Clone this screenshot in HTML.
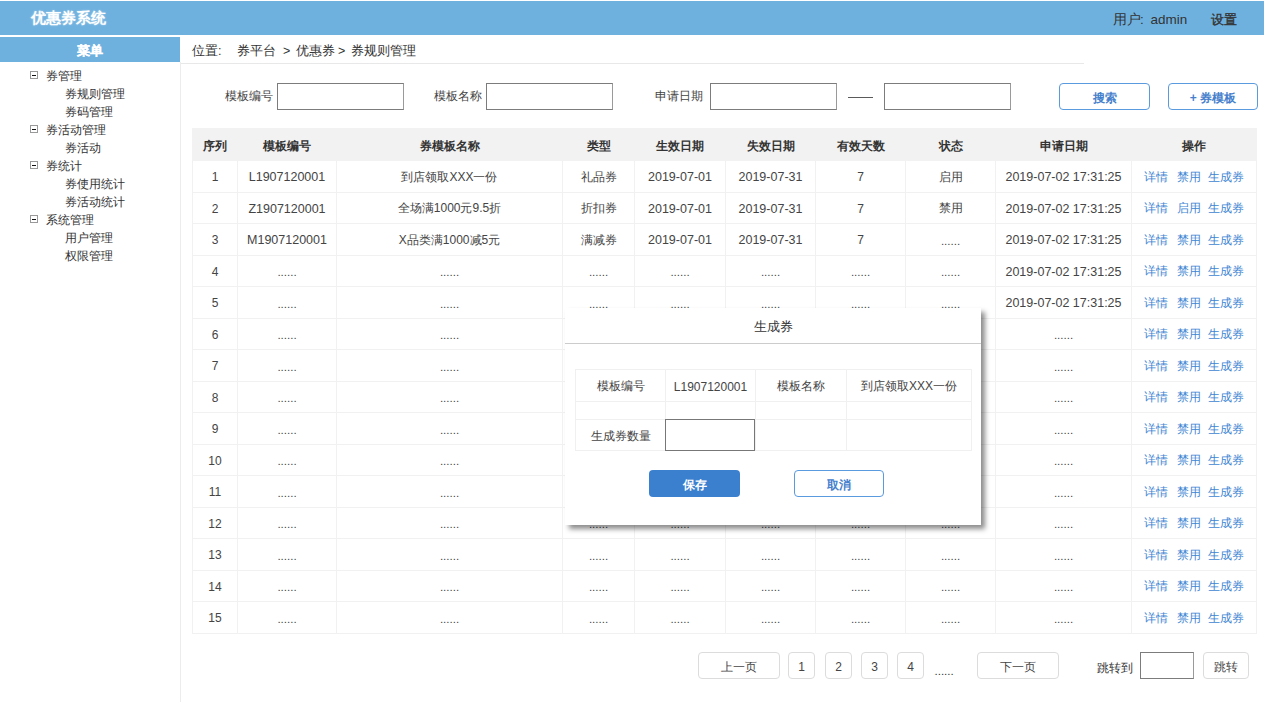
<!DOCTYPE html>
<html><head><meta charset="utf-8">
<style>
*{box-sizing:border-box;margin:0;padding:0}
html,body{width:1280px;height:702px;overflow:hidden;background:#fff}
body{position:relative;font-family:"Liberation Sans",sans-serif;color:#333;font-size:12px}
.a{position:absolute;white-space:nowrap}
#hdr{left:0;top:1px;width:1264px;height:34px;background:#6eb1df}
#title{left:31px;top:8px;font-size:14.5px;font-weight:bold;color:#fff;line-height:20px;text-shadow:0 0 2px rgba(255,255,255,.5)}
.user{top:10.5px;font-size:13.5px;line-height:18px;color:#333}
#sidehd{left:0;top:37px;width:180px;height:25px;background:#6eb1df;color:#fff;font-weight:bold;text-align:center;line-height:29px;font-size:12.5px;-webkit-text-stroke:0.3px #fff}
#vline{left:180px;top:62px;width:1px;height:640px;background:#ececec}
.menu{left:30px;font-size:12.3px;line-height:18px;color:#333;margin-top:1px}
.menu .ic{display:inline-block;width:8px;height:8px;border:1px solid #999;position:relative;vertical-align:middle;margin-right:8px;top:-2px}
.menu .ic:after{content:"";position:absolute;left:1px;top:3px;width:4px;height:1.5px;background:#111}
.crumb{top:42px;font-size:12.5px;line-height:18px;color:#333}
#crumbline{left:181px;top:63px;width:903px;height:1px;background:#e8e8e8}
.lbl{font-size:11.7px;line-height:16px;color:#444;top:87.5px}
.inp{border:1px solid #7c7c7c;border-right-color:#9a9a9a;background:#fff;height:27px;top:83px}
.btn{top:83px;height:27px;border:1px solid #5a9ade;border-radius:4px;color:#4580cc;font-weight:bold;text-align:center;line-height:28px;font-size:12px;background:#fff}
table.t{position:absolute;left:192px;top:128px;border-collapse:collapse;table-layout:fixed;width:1064px}
table.t th{background:#f2f2f2;height:32px;font-weight:bold;font-size:12px;color:#333;border:1px solid #f2f2f2;padding-top:3px}
table.t td{height:31.5px;font-size:12px;text-align:center;color:#444;border:1px solid #f1f1f1;padding-top:2px}
table.t td.dots{font-size:11.5px;padding-top:3px}
table.t td.op{color:#3f86d3;text-align:left;padding-left:12px;white-space:nowrap}
td.op span{margin-right:8.5px}
td.op span.m{margin-right:7px}
table.t td.n{font-size:12.5px}
table.d td{border:1px solid #f0f0f0;text-align:center;font-size:12px;color:#444;padding:2px 0 0}
#dlg{left:565px;top:308px;width:416px;height:217px;background:#fff;box-shadow:4px 4px 5px rgba(0,0,0,.45)}
.pg{top:652px;height:27px;border:1px solid #dcdcdc;border-radius:4px;text-align:center;line-height:28px;font-size:12px;color:#444;background:#fff}
</style></head><body>
<div id="hdr" class="a"></div>
<div id="title" class="a">优惠券系统</div>
<div class="a user" style="left:1112.5px">用户</div><div class="a user" style="left:1140px">:</div><div class="a user" style="left:1150.5px">admin</div><div class="a user" style="left:1211px;font-size:13px;-webkit-text-stroke:0.35px #333">设置</div>
<div id="sidehd" class="a">菜单</div>
<div id="vline" class="a"></div>

<div class="a menu" style="top:66px"><span class="ic"></span>券管理</div>
<div class="a menu" style="top:84px;left:65px">券规则管理</div>
<div class="a menu" style="top:102px;left:65px">券码管理</div>
<div class="a menu" style="top:120px"><span class="ic"></span>券活动管理</div>
<div class="a menu" style="top:138px;left:65px">券活动</div>
<div class="a menu" style="top:156px"><span class="ic"></span>券统计</div>
<div class="a menu" style="top:174px;left:65px">券使用统计</div>
<div class="a menu" style="top:192px;left:65px">券活动统计</div>
<div class="a menu" style="top:210px"><span class="ic"></span>系统管理</div>
<div class="a menu" style="top:228px;left:65px">用户管理</div>
<div class="a menu" style="top:246px;left:65px">权限管理</div>

<div class="a crumb" style="left:192px">位置:</div><div class="a crumb" style="left:237px">券平台</div><div class="a crumb" style="left:283px">&gt;</div><div class="a crumb" style="left:295.5px">优惠券</div><div class="a crumb" style="left:338px">&gt;</div><div class="a crumb" style="left:350.5px">券规则管理</div>
<div id="crumbline" class="a"></div>

<div class="a lbl" style="left:225px">模板编号</div>
<div class="a inp" style="left:277px;width:127px"></div>
<div class="a lbl" style="left:434px">模板名称</div>
<div class="a inp" style="left:486px;width:127px"></div>
<div class="a lbl" style="left:655px">申请日期</div>
<div class="a inp" style="left:710px;width:127px"></div>
<div class="a" style="left:848px;top:97px;width:25px;height:1px;background:#5a5a5a"></div>
<div class="a inp" style="left:884px;width:127px"></div>
<div class="a btn" style="left:1059px;width:91px">搜索</div>
<div class="a btn" style="left:1168px;width:90px">+ 券模板</div>

<table class="t">
<colgroup><col style="width:45px"><col style="width:99px"><col style="width:226px"><col style="width:72px"><col style="width:91px"><col style="width:90px"><col style="width:90px"><col style="width:90px"><col style="width:136px"><col style="width:125px"></colgroup>
<tr><th>序列</th><th>模板编号</th><th>券模板名称</th><th>类型</th><th>生效日期</th><th>失效日期</th><th>有效天数</th><th>状态</th><th>申请日期</th><th>操作</th></tr>
<tr><td>1</td><td class="n">L1907120001</td><td>到店领取XXX一份</td><td>礼品券</td><td class="n">2019-07-01</td><td class="n">2019-07-31</td><td>7</td><td>启用</td><td class="n">2019-07-02 17:31:25</td><td class="op"><span>详情</span><span class="m">禁用</span><span>生成券</span></td></tr>
<tr><td>2</td><td class="n">Z1907120001</td><td>全场满1000元9.5折</td><td>折扣券</td><td class="n">2019-07-01</td><td class="n">2019-07-31</td><td>7</td><td>禁用</td><td class="n">2019-07-02 17:31:25</td><td class="op"><span>详情</span><span class="m">启用</span><span>生成券</span></td></tr>
<tr><td>3</td><td class="n">M1907120001</td><td>X品类满1000减5元</td><td>满减券</td><td class="n">2019-07-01</td><td class="n">2019-07-31</td><td>7</td><td class="dots">......</td><td class="n">2019-07-02 17:31:25</td><td class="op"><span>详情</span><span class="m">禁用</span><span>生成券</span></td></tr>
<tr><td>4</td><td class="dots">......</td><td class="dots">......</td><td class="dots">......</td><td class="dots">......</td><td class="dots">......</td><td class="dots">......</td><td class="dots">......</td><td class="n">2019-07-02 17:31:25</td><td class="op"><span>详情</span><span class="m">禁用</span><span>生成券</span></td></tr>
<tr><td>5</td><td class="dots">......</td><td class="dots">......</td><td class="dots">......</td><td class="dots">......</td><td class="dots">......</td><td class="dots">......</td><td class="dots">......</td><td class="n">2019-07-02 17:31:25</td><td class="op"><span>详情</span><span class="m">禁用</span><span>生成券</span></td></tr>
<tr><td>6</td><td class="dots">......</td><td class="dots">......</td><td class="dots">......</td><td class="dots">......</td><td class="dots">......</td><td class="dots">......</td><td class="dots">......</td><td class="dots">......</td><td class="op"><span>详情</span><span class="m">禁用</span><span>生成券</span></td></tr>
<tr><td>7</td><td class="dots">......</td><td class="dots">......</td><td class="dots">......</td><td class="dots">......</td><td class="dots">......</td><td class="dots">......</td><td class="dots">......</td><td class="dots">......</td><td class="op"><span>详情</span><span class="m">禁用</span><span>生成券</span></td></tr>
<tr><td>8</td><td class="dots">......</td><td class="dots">......</td><td class="dots">......</td><td class="dots">......</td><td class="dots">......</td><td class="dots">......</td><td class="dots">......</td><td class="dots">......</td><td class="op"><span>详情</span><span class="m">禁用</span><span>生成券</span></td></tr>
<tr><td>9</td><td class="dots">......</td><td class="dots">......</td><td class="dots">......</td><td class="dots">......</td><td class="dots">......</td><td class="dots">......</td><td class="dots">......</td><td class="dots">......</td><td class="op"><span>详情</span><span class="m">禁用</span><span>生成券</span></td></tr>
<tr><td>10</td><td class="dots">......</td><td class="dots">......</td><td class="dots">......</td><td class="dots">......</td><td class="dots">......</td><td class="dots">......</td><td class="dots">......</td><td class="dots">......</td><td class="op"><span>详情</span><span class="m">禁用</span><span>生成券</span></td></tr>
<tr><td>11</td><td class="dots">......</td><td class="dots">......</td><td class="dots">......</td><td class="dots">......</td><td class="dots">......</td><td class="dots">......</td><td class="dots">......</td><td class="dots">......</td><td class="op"><span>详情</span><span class="m">禁用</span><span>生成券</span></td></tr>
<tr><td>12</td><td class="dots">......</td><td class="dots">......</td><td class="dots">......</td><td class="dots">......</td><td class="dots">......</td><td class="dots">......</td><td class="dots">......</td><td class="dots">......</td><td class="op"><span>详情</span><span class="m">禁用</span><span>生成券</span></td></tr>
<tr><td>13</td><td class="dots">......</td><td class="dots">......</td><td class="dots">......</td><td class="dots">......</td><td class="dots">......</td><td class="dots">......</td><td class="dots">......</td><td class="dots">......</td><td class="op"><span>详情</span><span class="m">禁用</span><span>生成券</span></td></tr>
<tr><td>14</td><td class="dots">......</td><td class="dots">......</td><td class="dots">......</td><td class="dots">......</td><td class="dots">......</td><td class="dots">......</td><td class="dots">......</td><td class="dots">......</td><td class="op"><span>详情</span><span class="m">禁用</span><span>生成券</span></td></tr>
<tr><td>15</td><td class="dots">......</td><td class="dots">......</td><td class="dots">......</td><td class="dots">......</td><td class="dots">......</td><td class="dots">......</td><td class="dots">......</td><td class="dots">......</td><td class="op"><span>详情</span><span class="m">禁用</span><span>生成券</span></td></tr>
</table>

<div id="dlg" class="a">
<div class="a" style="left:0;top:10px;width:416px;text-align:center;font-size:12.5px;line-height:18px;color:#333">生成券</div>
<div class="a" style="left:0;top:35px;width:416px;height:1px;background:#ccc"></div>
<table class="d" style="position:absolute;left:10px;top:61px;border-collapse:collapse;table-layout:fixed;width:397px">
<colgroup><col style="width:90px"><col style="width:90px"><col style="width:91px"><col style="width:125px"></colgroup>
<tr style="height:32px"><td>模板编号</td><td class="n">L1907120001</td><td>模板名称</td><td>到店领取XXX一份</td></tr>
<tr style="height:18px"><td></td><td></td><td></td><td></td></tr>
<tr style="height:31px"><td>生成券数量</td><td></td><td></td><td></td></tr>
</table>
<div class="a" style="left:100px;top:111px;width:90px;height:31.5px;border:1px solid #777"></div>
<div class="a" style="left:84px;top:162px;width:91px;height:27px;background:#3b80cf;border-radius:4px;color:#fff;font-weight:bold;text-align:center;line-height:31px;font-size:12px">保存</div>
<div class="a" style="left:229px;top:162px;width:90px;height:27px;border:1px solid #5a9ade;border-radius:4px;color:#4580cc;font-weight:bold;text-align:center;line-height:29px;font-size:12px">取消</div>
</div>

<div class="a pg" style="left:698px;width:82px">上一页</div>
<div class="a pg" style="left:788px;width:27px">1</div>
<div class="a pg" style="left:825px;width:27px">2</div>
<div class="a pg" style="left:861px;width:27px">3</div>
<div class="a pg" style="left:897px;width:27px">4</div>
<div class="a" style="left:934.5px;top:664.5px;font-size:11.5px">......</div>
<div class="a pg" style="left:977px;width:82px">下一页</div>
<div class="a" style="left:1097px;top:659.5px;font-size:12px">跳转到</div>
<div class="a inp" style="left:1140px;top:652px;width:54px"></div>
<div class="a pg" style="left:1203px;width:46px">跳转</div>
</body></html>
